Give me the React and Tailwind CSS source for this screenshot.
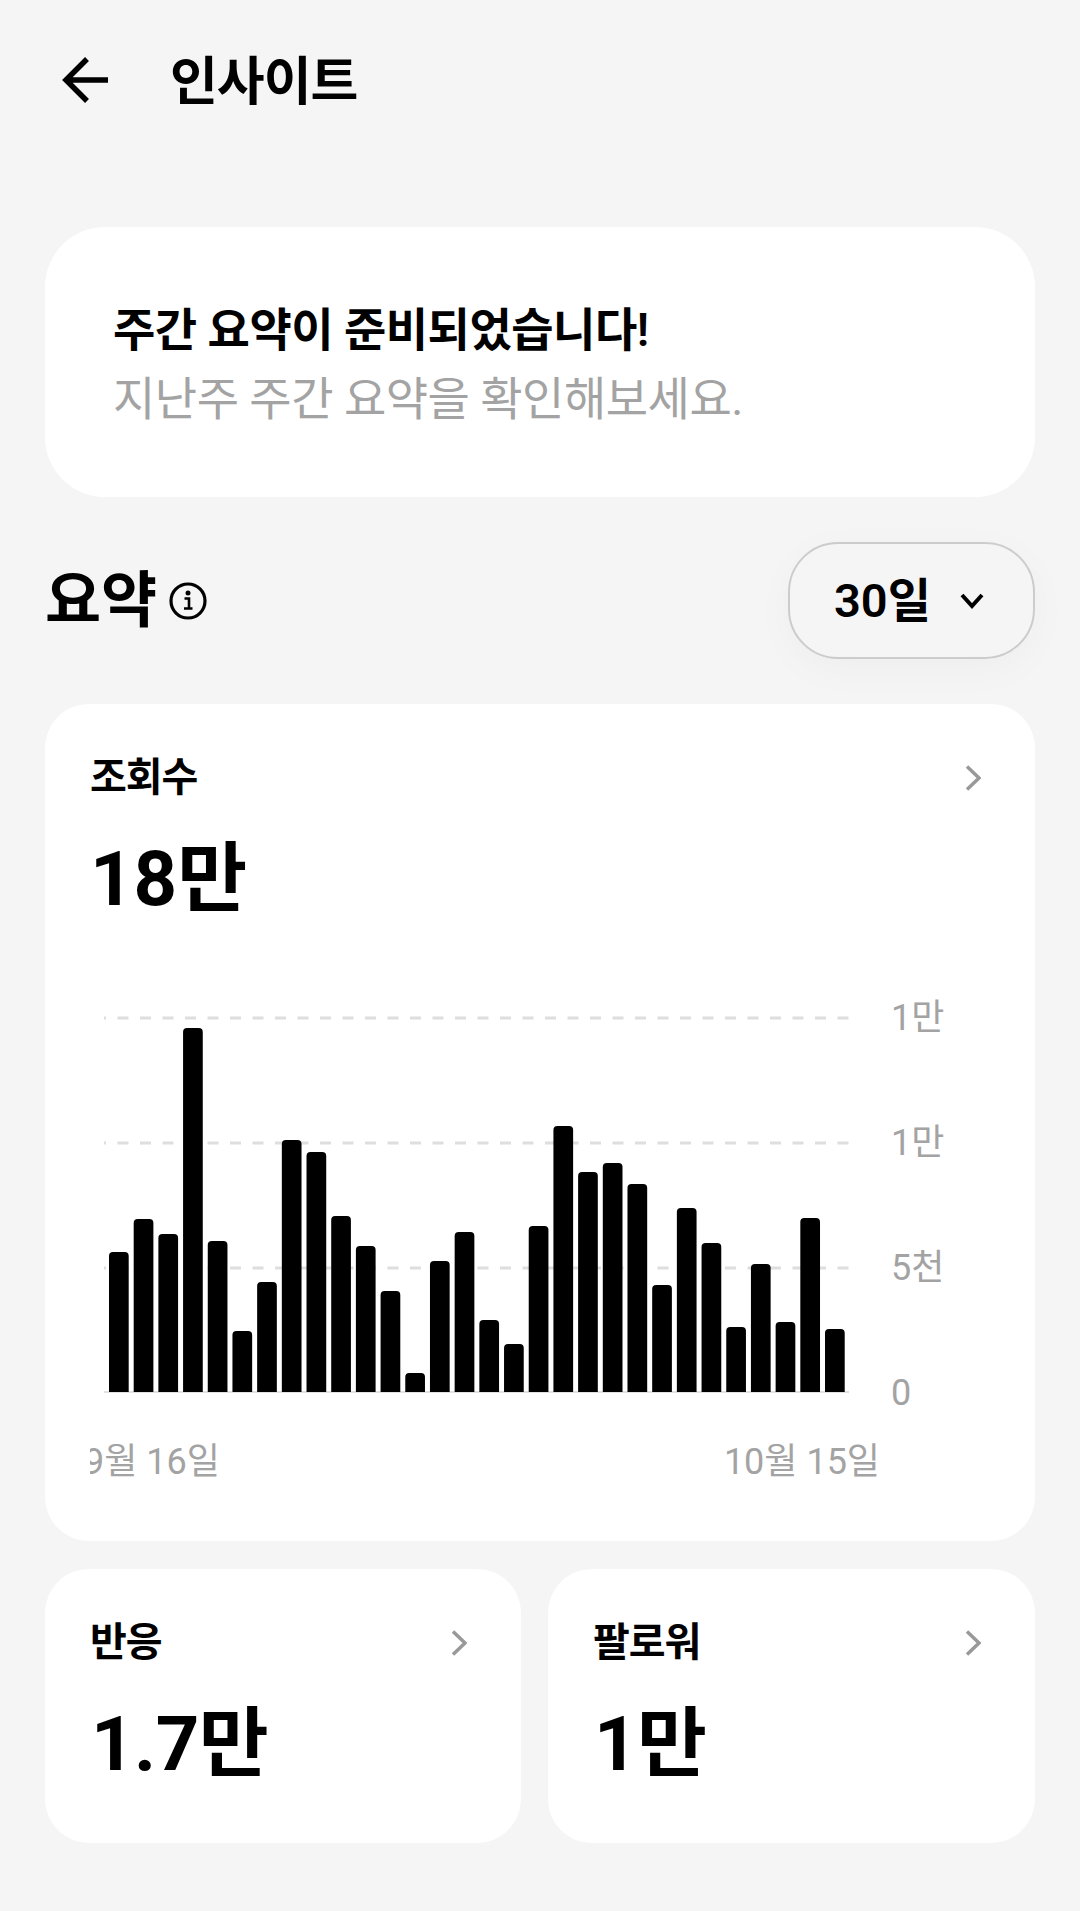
import { Fragment } from "react";

const FONT = "font-['Roboto','Noto_Sans_CJK_KR',sans-serif]";

// 막대 높이 (px)
const BARS = [140, 173, 158, 364, 151, 61, 110, 252, 240, 176, 146, 101, 19, 131, 160, 72, 48, 166, 266, 220, 229, 208, 107, 184, 149, 65, 128, 70, 174, 63];
const GRID_Y = [1, 126, 251];
const AXIS = ["1만", "1만", "5천", "0"];

function ChevronRight() {
    return (
        <svg width="16" height="26" viewBox="0 0 16 26" fill="none" className="shrink-0">
            <path d="M2 1.5 L14 13 L2 24.5" stroke="#999999" strokeWidth="3.5" />
        </svg>
    );
}

function Chart() {
    return (
        <svg width="750" height="376" viewBox="0 0 750 376" className="block shrink-0 overflow-visible">
            {GRID_Y.map((y) => (
                <line key={y} x1="0" x2="745" y1={y} y2={y} stroke="#dedede" strokeWidth="3" strokeDasharray="11 11.5" strokeDashoffset="9" />
            ))}
            <line x1="0" x2="745" y1="375" y2="375" stroke="#e2e2e2" strokeWidth="2" />
            {BARS.map((h, i) => (
                <path
                    key={i}
                    d={`M${5 + i * 24.69} 375 v${-(h - 4)} q0 -4 4 -4 h11.7 q4 0 4 4 v${h - 4} z`}
                    fill="#000"
                />
            ))}
        </svg>
    );
}

function SmallCard({ label, value, className }) {
    return (
        <div className={`h-[274px] rounded-[44px] bg-white pl-[45px] pr-[54px] pt-[50px] ${className}`}>
            <div className="flex h-[48px] items-center justify-between">
                <span className="text-[40px] leading-[48px] font-semibold tracking-[-1px]">{label}</span>
                <ChevronRight />
            </div>
            <p className="ml-[1px] mt-[32px] text-[76px] leading-[90px] font-bold tracking-[-0.5px]">{value}</p>
        </div>
    );
}

export default function App() {
    return (
        <div className={`h-[1911px] w-[1080px] overflow-hidden bg-[#f5f5f5] text-black ${FONT}`}>
            {/* Header */}
            <header className="flex h-[160px] items-start pl-[62px] pt-[56px]">
                <svg width="48" height="48" viewBox="0 0 48 48" fill="none" className="shrink-0">
                    <path d="M25 3 L4 24 L25 45 M4 24 H46" stroke="#000" strokeWidth="5.5" />
                </svg>
                <h1 className="ml-[60px] mt-[-6px] text-[52px] leading-[66px] font-bold tracking-[-1px]">인사이트</h1>
            </header>

            <main className="px-[45px]">
                {/* Weekly recap */}
                <section className="mt-[67px] flex h-[270px] flex-col justify-center rounded-[60px] bg-white pl-[68px] pt-[5px]">
                    <p className="text-[46px] leading-[64px] font-semibold tracking-[-0.5px]">주간 요약이 준비되었습니다!</p>
                    <p className="mt-[5px] text-[46px] leading-[64px] text-[#a3a3a3] tracking-[-0.5px]">지난주 주간 요약을 확인해보세요.</p>
                </section>

                {/* Summary title */}
                <div className="mt-[45px] flex h-[117px] items-center justify-between">
                    <div className="flex items-center gap-[12px]">
                        <h2 className="text-[61px] leading-[70px] font-bold">요약</h2>
                        <svg width="38" height="38" viewBox="0 0 38 38" fill="none" className="shrink-0">
                            <circle cx="19" cy="19" r="17" stroke="#000" strokeWidth="3.2" />
                            <circle cx="19" cy="11" r="2.5" fill="#000" />
                            <path d="M15.5 16.5 H20 V26 M15 26.5 H23.5" stroke="#000" strokeWidth="2.6" />
                        </svg>
                    </div>
                    <button className="flex h-[117px] w-[247px] items-center justify-center gap-[28px] rounded-[50px] border-2 border-[#cccccc] bg-[#f5f5f5] pr-[4px] shadow-[0_10px_40px_rgba(0,0,0,0.03)]">
                        <span className="text-[47px] leading-[56px] font-semibold">30일</span>
                        <svg width="26" height="18" viewBox="0 0 26 18" fill="none" className="shrink-0">
                            <path d="M3 3 L13 14 L23 3" stroke="#000" strokeWidth="4" />
                        </svg>
                    </button>
                </div>

                {/* Views */}
                <section className="mt-[45px] h-[837px] rounded-[44px] bg-white pl-[45px] pr-[54px] pt-[50px]">
                    <div className="flex h-[48px] items-center justify-between">
                        <span className="text-[40px] leading-[48px] font-semibold tracking-[-1px]">조회수</span>
                        <ChevronRight />
                    </div>
                    <p className="mt-[32px] text-[76px] leading-[90px] font-bold">18만</p>

                    <div className="mt-[93px] flex items-start pl-[14px]">
                        <Chart />
                        <div className="ml-[37px] flex h-[376px] flex-col justify-between text-[36px] leading-[0px] text-[#a3a3a3]">
                            {AXIS.map((a, i) => (
                                <Fragment key={i}>
                                    <span className={i === 0 ? "mt-[1px]" : ""}>{a}</span>
                                </Fragment>
                            ))}
                        </div>
                    </div>

                    <div className="mt-[46px] flex h-[46px] w-[790px] justify-between overflow-hidden text-[36px] leading-[46px] text-[#a3a3a3]">
                        <span className="ml-[-6px]">9월 16일</span>
                        <span>10월 15일</span>
                    </div>
                </section>

                {/* Reactions, followers */}
                <div className="mt-[28px] flex gap-[27px]">
                    <SmallCard label="반응" value="1.7만" className="w-[476px]" />
                    <SmallCard label="팔로워" value="1만" className="w-[487px]" />
                </div>
            </main>
        </div>
    );
}
